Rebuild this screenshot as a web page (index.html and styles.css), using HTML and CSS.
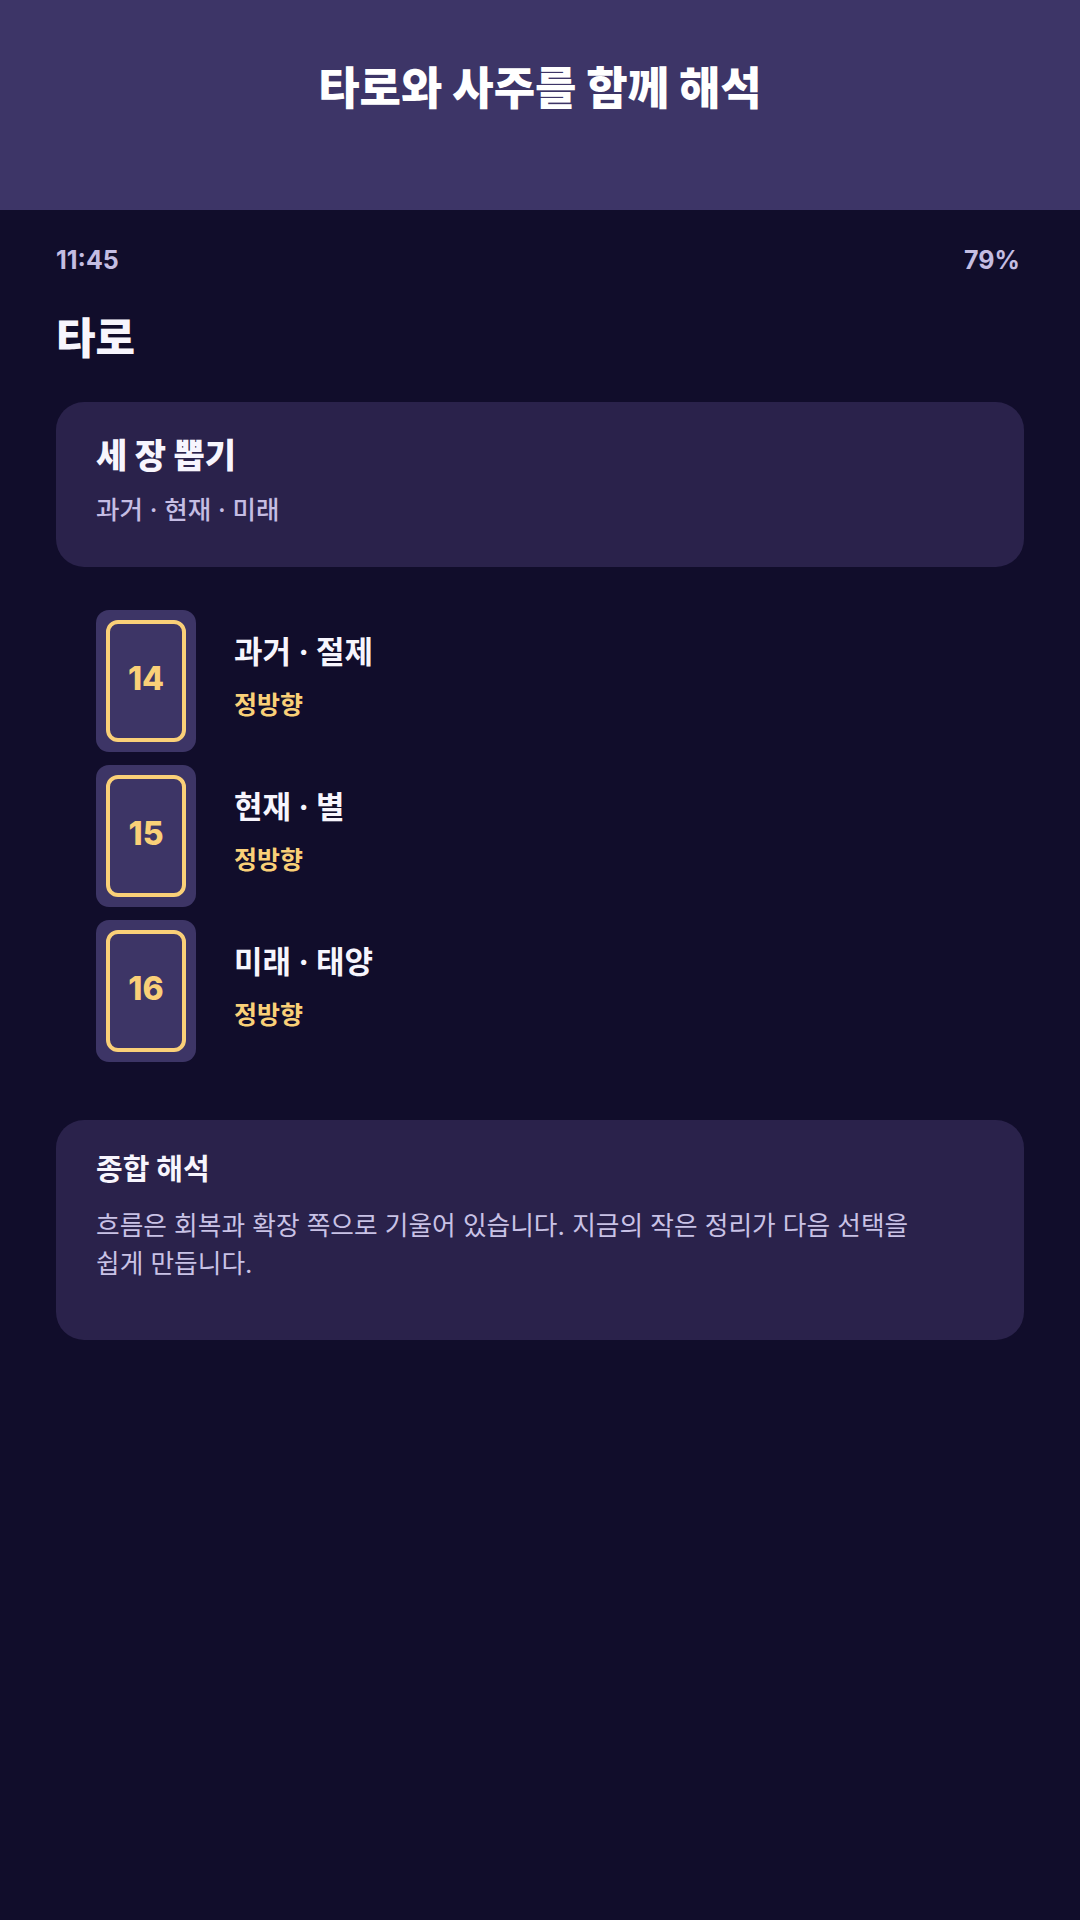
FILE: index.html
```html
<!DOCTYPE html>
<html lang="ko">
<head>
<meta charset="utf-8">
<title>타로와 사주를 함께 해석</title>
<link rel="stylesheet" href="styles.css">
</head>
<body>
<header class="hero">
  <h1 class="hero-title">타로와 사주를 함께 해석</h1>
</header>
<main class="screen">
  <div class="status">
    <span>11:45</span>
    <span>79%</span>
  </div>
  <h2 class="page-title">타로</h2>
  <section class="card spread">
    <h3 class="card-title">세 장 뽑기</h3>
    <p class="card-sub">과거 · 현재 · 미래</p>
  </section>
  <ul class="draws">
    <li class="draw">
      <div class="thumb"><div class="thumb-inner">14</div></div>
      <div class="draw-text">
        <div class="draw-title">과거 · 절제</div>
        <div class="draw-dir">정방향</div>
      </div>
    </li>
    <li class="draw">
      <div class="thumb"><div class="thumb-inner">15</div></div>
      <div class="draw-text">
        <div class="draw-title">현재 · 별</div>
        <div class="draw-dir">정방향</div>
      </div>
    </li>
    <li class="draw">
      <div class="thumb"><div class="thumb-inner">16</div></div>
      <div class="draw-text">
        <div class="draw-title">미래 · 태양</div>
        <div class="draw-dir">정방향</div>
      </div>
    </li>
  </ul>
  <section class="card summary">
    <h3 class="summary-title">종합 해석</h3>
    <p class="summary-body">흐름은 회복과 확장 쪽으로 기울어 있습니다. 지금의 작은 정리가 다음 선택을 쉽게 만듭니다.</p>
  </section>
</main>
</body>
</html>
```

FILE: styles.css
```css
* { box-sizing: border-box; }
html, body {
  margin: 0;
  padding: 0;
}
body {
  width: 1080px;
  min-height: 1920px;
  background: #110d2b;
  font-family: Inter, "Noto Sans CJK KR", sans-serif;
  color: #f4f2fb;
}
h1, h2, h3, p, ul { margin: 0; padding: 0; }
ul { list-style: none; }

.hero {
  height: 210px;
  background: #3d3567;
  padding-top: 60px;
}
.hero-title {
  text-align: center;
  font-size: 45px;
  line-height: 58px;
  font-weight: 800;
  color: #ffffff;
}

.screen {
  padding: 36px 56px 0;
}
.status {
  display: flex;
  justify-content: space-between;
  font-size: 25px;
  line-height: 28px;
  font-weight: 700;
  color: #c4bde2;
  padding-right: 4px;
}
.page-title {
  margin-top: 36px;
  font-size: 43px;
  line-height: 56px;
  font-weight: 800;
  color: #f7f5fd;
}

.card {
  background: #2a224b;
  border-radius: 28px;
}
.spread {
  margin-top: 36px;
  padding: 32px 40px 39px;
}
.card-title {
  font-size: 34px;
  line-height: 44px;
  font-weight: 800;
  color: #f7f5fd;
}
.card-sub {
  margin-top: 14px;
  font-size: 25.5px;
  line-height: 36px;
  font-weight: 500;
  color: #c5bde3;
}

.draws {
  margin-top: 43px;
  padding-left: 40px;
  display: flex;
  flex-direction: column;
  gap: 13px;
}
.draw {
  display: flex;
  align-items: flex-start;
  gap: 38px;
}
.thumb {
  width: 100px;
  height: 142px;
  flex: none;
  background: #3d3566;
  border-radius: 13px;
  padding: 10px;
}
.thumb-inner {
  width: 100%;
  height: 100%;
  border: 4px solid #fad078;
  border-radius: 12px;
  padding-bottom: 6px;
  display: flex;
  align-items: center;
  justify-content: center;
  font-size: 32px;
  font-weight: 800;
  color: #fad078;
}
.draw-text {
  padding-top: 22px;
}
.draw-title {
  font-size: 31px;
  line-height: 40px;
  font-weight: 700;
  color: #f7f5fd;
}
.draw-dir {
  margin-top: 17px;
  font-size: 25px;
  line-height: 32px;
  font-weight: 700;
  color: #fad078;
}

.summary {
  margin-top: 58px;
  padding: 30px 40px 57px;
}
.summary-title {
  font-size: 29px;
  line-height: 40px;
  font-weight: 700;
  color: #f7f5fd;
}
.summary-body {
  margin-top: 17px;
  max-width: 840px;
  font-size: 25.7px;
  line-height: 38px;
  font-weight: 400;
  word-break: keep-all;
  color: #c9c2e6;
}
```
